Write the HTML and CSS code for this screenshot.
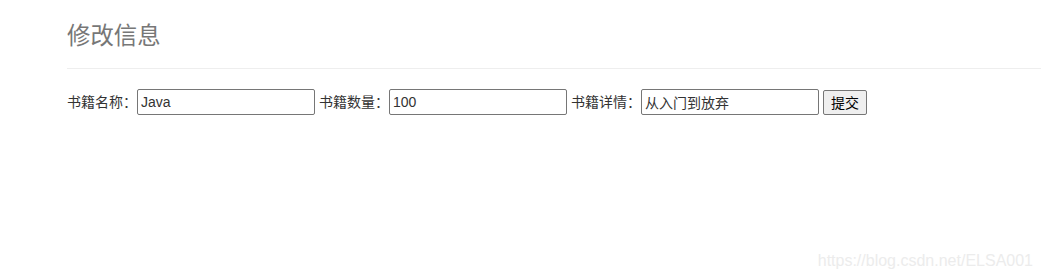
FILE: index.html
```html
<!DOCTYPE html>
<html lang="zh">
<head>
<meta charset="utf-8">
<title>修改信息</title>
<link rel="stylesheet" href="styles.css">
</head>
<body>
<div class="container">
  <div class="page-header">
    <h1 class="title">修改信息</h1>
  </div>
  <form class="form-row">
    <label class="label">书籍名称：</label><input class="field" type="text" value="Java">
    <label class="label">书籍数量：</label><input class="field" type="text" value="100">
    <label class="label">书籍详情：</label><input class="field" type="text" value="从入门到放弃">
    <button class="submit" type="button">提交</button>
  </form>
</div>
<div class="watermark">https://blog.csdn.net/ELSA001</div>
</body>
</html>
```

FILE: styles.css
```css
html, body {
  margin: 0;
  padding: 0;
  background: #fff;
}
body {
  font-family: "Liberation Sans", "Noto Sans CJK SC", sans-serif;
  font-size: 14px;
  color: #333;
  width: 1041px;
  height: 279px;
  overflow: hidden;
  position: relative;
}
.container {
  padding-left: 67px;
}
.page-header {
  padding-top: 23px;
  padding-bottom: 18px;
  border-bottom: 1px solid #eee;
}
.title {
  margin: 0;
  font-size: 23.4px;
  line-height: 27px;
  font-weight: normal;
  color: #777;
}
.form-row {
  display: flex;
  align-items: center;
  gap: 4px;
  margin: 20px 0 0 0;
}
.label {
  font-size: 14px;
  line-height: 20px;
  color: #333;
  margin-right: -4px;
}
.field {
  box-sizing: border-box;
  width: 178px;
  height: 26px;
  margin: 0;
  padding: 1px 3px;
  border: 1px solid #767676;
  border-radius: 2px;
  font-family: "Liberation Sans", "Noto Sans CJK SC", sans-serif;
  font-size: 14px;
  color: #333;
  background: #fff;
}
.submit {
  box-sizing: border-box;
  width: 44px;
  height: 25px;
  margin: 0;
  padding: 0 6px;
  border: 1px solid #767676;
  border-radius: 2px;
  background: #efefef;
  font-family: "Liberation Sans", "Noto Sans CJK SC", sans-serif;
  font-size: 14px;
  color: #000;
}
.watermark {
  position: absolute;
  right: 8px;
  bottom: 9px;
  font-size: 16px;
  color: #ececec;
  font-family: "Liberation Sans", "Noto Sans CJK SC", sans-serif;
}
```
